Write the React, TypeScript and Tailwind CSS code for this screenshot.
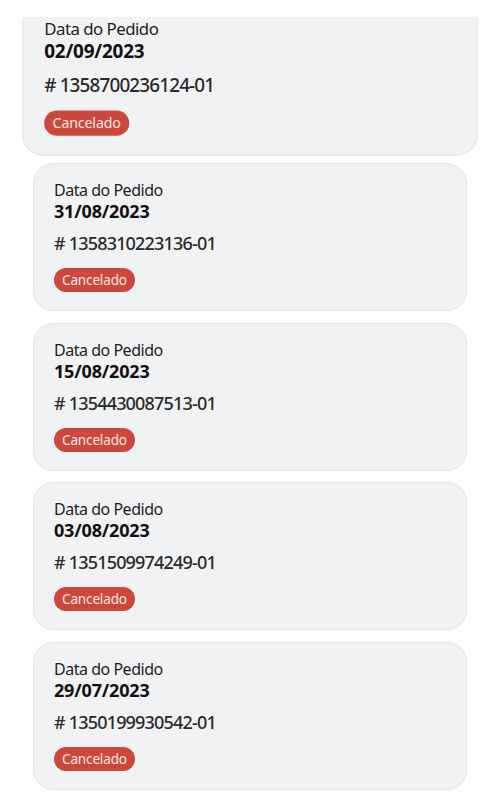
const orders = [
  { date: "02/09/2023", number: "1358700236124-01" },
  { date: "31/08/2023", number: "1358310223136-01" },
  { date: "15/08/2023", number: "1354430087513-01" },
  { date: "03/08/2023", number: "1351509974249-01" },
  { date: "29/07/2023", number: "1350199930542-01" },
];

function OrderCard({ date, number, active }: { date: string; number: string; active?: boolean }) {
  return (
    <div
      className={`h-[148px] rounded-[20px] border border-[#e3e4e6] bg-[#f1f2f4] px-5 pt-[16px] ${
        active ? "scale-[1.05] origin-center" : ""
      }`}
    >
      <p className="text-[16px] leading-5 tracking-[-0.03em] text-[#1e1e1e]">Data do Pedido</p>
      <p className="text-[18px] leading-[22px] font-bold tracking-[-0.01em] text-[#111]">{date}</p>
      <p className="mt-[10px] text-[18px] leading-[22px] font-medium tracking-[-0.045em] text-[#2a2a2a]"># {number}</p>
      <span className="mt-[14px] inline-block rounded-full bg-[#cc483c] px-[8px] text-[13.5px] leading-6 tracking-[-0.01em] text-[#fbe9e6]">
        Cancelado
      </span>
    </div>
  );
}

export default function App() {
  return (
    <div className="relative h-[793px] w-[500px] overflow-hidden bg-white" style={{ fontFamily: '"Noto Sans", sans-serif' }}>
      <div className="absolute top-0 left-0 z-10 h-[17px] w-full bg-white"></div>
      <div className="flex flex-col gap-[11.5px] px-[33px] pt-[3.5px]">
        {orders.map((o, i) => (
          <OrderCard key={o.number} date={o.date} number={o.number} active={i === 0} />
        ))}
      </div>
    </div>
  );
}
